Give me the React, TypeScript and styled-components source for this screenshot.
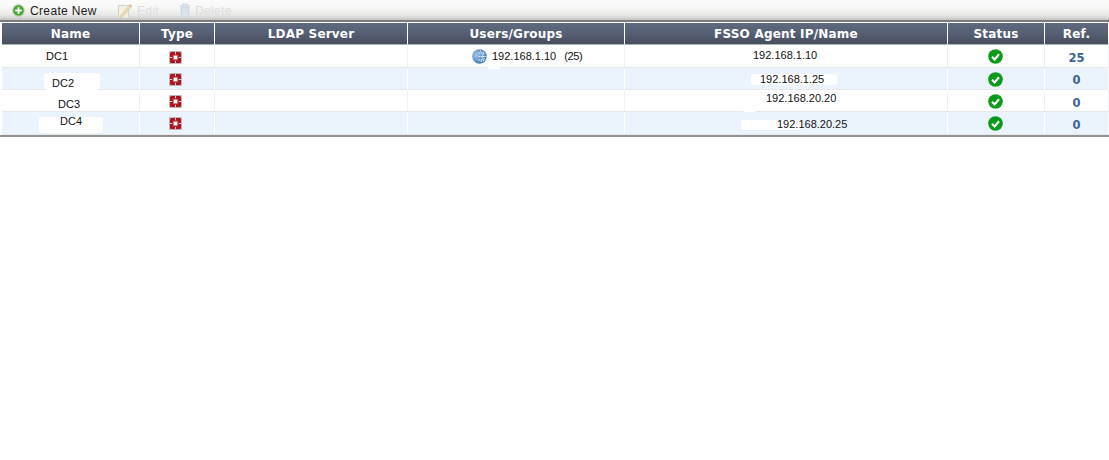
import React from "react";
import styled, { createGlobalStyle } from "styled-components";

const Global = createGlobalStyle`
  html, body { margin: 0; padding: 0; background: #fff; }
  body { font-family: "DejaVu Sans", sans-serif; width: 1109px; height: 460px; overflow: hidden; }
`;

const COLUMNS = "138px 75px 193px 217px 323px 97px 64px";

const Page = styled.div`
  width: 1109px;
  height: 460px;
  background: #fff;
`;

const Toolbar = styled.div`
  height: 20px;
  box-sizing: border-box;
  display: flex;
  align-items: center;
  padding: 1px 0 0 12px;
  background: linear-gradient(#fbfbfb 0%, #f8f8f7 35%, #e9e9e8 75%, #c4c4c3 100%);
`;

const ToolButton = styled.div<{ $width: number; $off?: boolean }>`
  display: flex;
  align-items: center;
  gap: ${(p) => (p.$off ? 4 : 5)}px;
  width: ${(p) => p.$width}px;
  font-family: "Liberation Sans", sans-serif;
  font-size: 12px;
  letter-spacing: 0.35px;
  color: ${(p) => (p.$off ? "#dedede" : "#1c1c1c")};
`;

const Rule = styled.div`
  height: 2px;
  background: #7c7c7c;
`;

const Table = styled.div`
  margin-top: 1px;
  padding-left: 2px;
  border-bottom: 2px solid #929292;
`;

const HeaderRow = styled.div`
  display: grid;
  grid-template-columns: ${COLUMNS};
  height: 22px;
`;

const HeaderCell = styled.div`
  display: flex;
  align-items: center;
  justify-content: center;
  box-sizing: border-box;
  border-right: 1px solid #fff;
  border-bottom: 1px solid #a9b6b8;
  padding-top: 1px;
  background: linear-gradient(#5f6a80 0%, #565f73 50%, #474e5e 100%);
  color: #fff;
  font-size: 12px;
  font-weight: 700;
  letter-spacing: 0.2px;
`;

const Row = styled.div<{ $height: number; $alt?: boolean }>`
  display: grid;
  grid-template-columns: ${COLUMNS};
  height: ${(p) => p.$height}px;
  box-sizing: border-box;
  background: ${(p) => (p.$alt ? "#ebf3fc" : "#fff")};
  border-bottom: 1px solid #e6e8ea;
`;

const Cell = styled.div<{ $left?: number; $top?: number; $center?: boolean; $right?: number; $alt?: boolean }>`
  position: relative;
  display: flex;
  align-items: flex-start;
  justify-content: ${(p) => (p.$center ? "center" : "flex-start")};
  box-sizing: border-box;
  padding-left: ${(p) => p.$left ?? 0}px;
  padding-right: ${(p) => p.$right ?? 0}px;
  padding-top: ${(p) => p.$top ?? 0}px;
  border-right: 1px solid ${(p) => (p.$alt ? "#fff" : "#f0f1f2")};
  font-family: "Liberation Sans", sans-serif;
  font-size: 11px;
  line-height: 13px;
  color: #111;
`;

const RefCount = styled.span`
  font-family: "DejaVu Sans", sans-serif;
  font-size: 11.5px;
  font-weight: 700;
  line-height: 14px;
  color: #3d6291;
`;

const Entry = styled.span`
  display: flex;
  align-items: center;
  gap: 5px;
`;

const EntryCount = styled.span`
  margin-left: 8px;
  letter-spacing: -0.4px;
`;

const Smudge = styled.span<{ $x: number; $y: number; $w: number; $h: number }>`
  position: absolute;
  left: ${(p) => p.$x}px;
  top: ${(p) => p.$y}px;
  width: ${(p) => p.$w}px;
  height: ${(p) => p.$h}px;
  background: #fff;
  border-radius: 3px;
  filter: blur(0.6px);
`;

const CellText = styled.span`
  position: relative;
`;

const PlusIcon = () => (
  <svg width="13" height="13" viewBox="0 0 13 13">
    <circle cx="6.5" cy="6.5" r="6.2" fill="#a9c99f" />
    <circle cx="6.5" cy="6.5" r="5" fill="#43a32d" />
    <path d="M6.5 3.2v6.6M3.2 6.5h6.6" stroke="#fff" strokeWidth="2" />
  </svg>
);

const EditIcon = () => (
  <svg width="16" height="16" viewBox="0 0 16 16">
    <path d="M1.5 2.5h10v12.5h-10z" fill="#f3f1e4" stroke="#d2d2cc" />
    <path d="M3.5 12.5 13 1.5l2 1.6-9.5 11-2.6.9z" fill="#ecdcae" stroke="#cfc8ac" strokeWidth="0.7" />
    <path d="M13 1.5l2 1.6-1 1.2-2-1.6z" fill="#e8b7a8" />
  </svg>
);

const TrashIcon = () => (
  <svg width="12" height="15" viewBox="0 0 12 15">
    <path d="M0.5 2.8h11M4.2 2.4V1h3.6v1.4" stroke="#c9d6e2" strokeWidth="1.2" fill="none" />
    <path d="M1.6 4h8.8l-.6 10.4H2.2z" fill="#cbd7e2" />
    <path d="M4 5v8.5M6 5v8.5M8 5v8.5" stroke="#eef2f5" strokeWidth="0.9" />
  </svg>
);

const AgentIcon = () => (
  <svg width="13" height="13" viewBox="0 0 13 13">
    <rect width="13" height="13" rx="1" fill="#c4b4ba" />
    <rect x="1" y="1" width="11" height="11" rx="1.5" fill="#a8141f" />
    <path d="M6.5 1v2.4M6.5 9.6V12M1 6.5h2.4M9.6 6.5H12" stroke="#eec4c8" strokeWidth="1" />
    <rect x="3.6" y="3.6" width="5.8" height="5.8" fill="#b8323c" />
    <rect x="4.6" y="4.6" width="3.8" height="3.8" fill="#fff" />
  </svg>
);

const GlobeIcon = () => (
  <svg width="15" height="15" viewBox="0 0 15 15">
    <defs>
      <radialGradient id="globe" cx="0.3" cy="0.4" r="0.8">
        <stop offset="0" stopColor="#9cc3ea" />
        <stop offset="1" stopColor="#2d6aa6" />
      </radialGradient>
    </defs>
    <circle cx="7.5" cy="7.5" r="7.3" fill="url(#globe)" />
    <path
      d="M8 1.5c3 2 3.5 9 .5 12M11 2.5c1.6 3 1.6 7 0 10M6.5 4h7M6.5 7.5h8M6.5 11h7"
      stroke="#e4eefb"
      strokeWidth="1"
      fill="none"
      strokeDasharray="1.4 0.8"
    />
  </svg>
);

const CheckIcon = () => (
  <svg width="15" height="15" viewBox="0 0 15 15">
    <circle cx="7.5" cy="7.5" r="7.3" fill="#0c9a1a" />
    <path d="M4 7.8 6.6 10.4 11 5.2" stroke="#fff" strokeWidth="2.1" fill="none" />
  </svg>
);

const headers = ["Name", "Type", "LDAP Server", "Users/Groups", "FSSO Agent IP/Name", "Status", "Ref."];

type Spot = { x: number; y: number; w: number; h: number };
type RowData = {
  height: number;
  alt: boolean;
  name: string;
  nameLeft: number;
  nameTop: number;
  nameSmudge?: Spot;
  iconTop: number;
  ip: string;
  ipLeft: number;
  ipTop: number;
  ipSmudge?: Spot;
  statusTop: number;
  ref: string;
  refTop: number;
};

const rows: RowData[] = [
  { height: 23, alt: false, name: "DC1", nameLeft: 44, nameTop: 5, iconTop: 6, ip: "192.168.1.10", ipLeft: 128, ipTop: 4, statusTop: 4, ref: "25", refTop: 6 },
  { height: 22, alt: true, name: "DC2", nameLeft: 50, nameTop: 9, nameSmudge: { x: 42, y: 5, w: 56, h: 17 }, iconTop: 5, ip: "192.168.1.25", ipLeft: 135, ipTop: 5, ipSmudge: { x: 126, y: 6, w: 86, h: 11 }, statusTop: 4, ref: "0", refTop: 5 },
  { height: 22, alt: false, name: "DC3", nameLeft: 56, nameTop: 8, iconTop: 5, ip: "192.168.20.20", ipLeft: 141, ipTop: 2, ipSmudge: { x: 117, y: 15, w: 15, h: 7 }, statusTop: 4, ref: "0", refTop: 6 },
  { height: 23, alt: true, name: "DC4", nameLeft: 58, nameTop: 3, nameSmudge: { x: 37, y: 5, w: 64, h: 16 }, iconTop: 5, ip: "192.168.20.25", ipLeft: 152, ipTop: 6, ipSmudge: { x: 116, y: 8, w: 60, h: 10 }, statusTop: 4, ref: "0", refTop: 6 },
];

export default function App() {
  return (
    <Page>
      <Global />
      <Toolbar>
        <ToolButton $width={105}>
          <PlusIcon />
          Create New
        </ToolButton>
        <ToolButton $width={62} $off>
          <EditIcon />
          Edit
        </ToolButton>
        <ToolButton $width={70} $off>
          <TrashIcon />
          Delete
        </ToolButton>
      </Toolbar>
      <Rule />
      <Table>
        <HeaderRow>
          {headers.map((h) => (
            <HeaderCell key={h}>{h}</HeaderCell>
          ))}
        </HeaderRow>
        {rows.map((r, i) => (
          <Row key={r.name} $height={r.height} $alt={r.alt}>
            <Cell $alt={r.alt} $left={r.nameLeft} $top={r.nameTop}>
              {r.nameSmudge && <Smudge $x={r.nameSmudge.x} $y={r.nameSmudge.y} $w={r.nameSmudge.w} $h={r.nameSmudge.h} />}
              <CellText>{r.name}</CellText>
            </Cell>
            <Cell $alt={r.alt} $center $right={3} $top={r.iconTop}>
              <AgentIcon />
            </Cell>
            <Cell $alt={r.alt} />
            <Cell $alt={r.alt} $left={64} $top={4}>
              {i === 0 && (
                <Entry>
                  <GlobeIcon />
                  <span>
                    192.168.1.10
                    <EntryCount>(25)</EntryCount>
                  </span>
                </Entry>
              )}
              {i === 0 && <Smudge $x={80} $y={21} $w={12} $h={3} />}
            </Cell>
            <Cell $alt={r.alt} $left={r.ipLeft} $top={r.ipTop}>
              {r.ipSmudge && <Smudge $x={r.ipSmudge.x} $y={r.ipSmudge.y} $w={r.ipSmudge.w} $h={r.ipSmudge.h} />}
              <CellText>{r.ip}</CellText>
            </Cell>
            <Cell $alt={r.alt} $center $right={2} $top={r.statusTop}>
              <CheckIcon />
            </Cell>
            <Cell $alt={r.alt} $center $top={r.refTop}>
              <RefCount>{r.ref}</RefCount>
            </Cell>
          </Row>
        ))}
      </Table>
    </Page>
  );
}
